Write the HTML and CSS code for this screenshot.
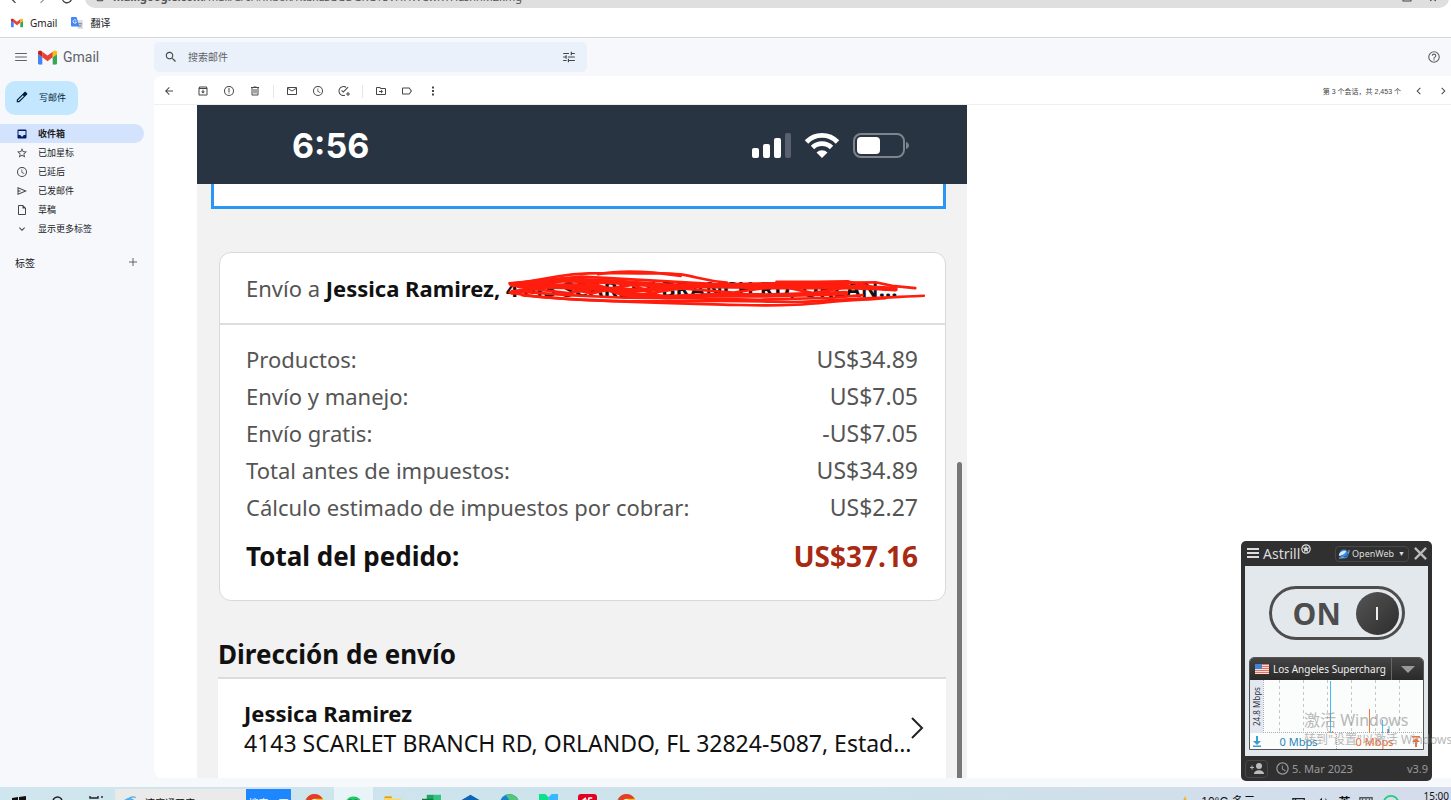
FILE: index.html
```html
<!DOCTYPE html>
<html lang="zh-CN">
<head>
    <meta charset="UTF-8">
    <meta name="viewport" content="width=device-width, initial-scale=1.0">
    <title>Gmail</title>
    <link rel="stylesheet" href="styles.css">
</head>
<body>
    <!-- Shared symbols -->
    <svg class="symbols" width="0" height="0">
        <symbol id="gmail" viewBox="52 42 88 66">
            <path fill="#4285f4" d="M58 108h14V74L52 59v43c0 3.320 2.690 6 6 6"/>
            <path fill="#34a853" d="M120 108h14c3.320 0 6-2.690 6-6V59l-20 15"/>
            <path fill="#fbbc04" d="M120 48v26l20-15v-8c0-7.420-8.470-11.650-14.400-7.200"/>
            <path fill="#ea4335" d="M72 74V48l24 18 24-18v26L96 92"/>
            <path fill="#c5221f" d="M52 51v8l20 15V48l-5.600-4.200c-5.940-4.450-14.400-.22-14.400 7.200"/>
        </symbol>
        <symbol id="chrome" viewBox="0 0 24 24">
            <circle cx="12" cy="12" r="12" fill="#fbc116"/>
            <path fill="#e33b2e" d="M12 0a12 12 0 0 1 10.400 6H12a6 6 0 0 0-5.200 9L1.600 6A12 12 0 0 1 12 0z"/>
            <path fill="#229a4a" d="M1.600 6l5.200 9a6 6 0 0 0 5.200 3l-2 6A12 12 0 0 1 1.600 6z"/>
            <circle cx="12" cy="12" r="5.500" fill="#fff"/>
            <circle cx="12" cy="12" r="4.300" fill="#4285f4"/>
        </symbol>
        <symbol id="clock" viewBox="0 0 24 24">
            <path d="M12 2a10 10 0 1 0 0 20 10 10 0 0 0 0-20zm0 18a8 8 0 1 1 0-16 8 8 0 0 1 0 16zm.5-13H11v6l5.200 3.200.8-1.300-4.500-2.700V7z"/>
        </symbol>
    </svg>

    <div class="address-bar">
        <div class="address-row">
            <button class="nav-btn" aria-label="Back"><svg viewBox="0 0 24 24"><path d="M20 11H7.800l5.600-5.600L12 4l-8 8 8 8 1.400-1.400L7.800 13H20z"/></svg></button>
            <button class="nav-btn muted" aria-label="Forward"><svg viewBox="0 0 24 24"><path d="M4 11h12.200l-5.600-5.600L12 4l8 8-8 8-1.400-1.400 5.600-5.600H4z"/></svg></button>
            <button class="nav-btn" aria-label="Reload"><svg viewBox="0 0 24 24"><path d="M17.600 6.400A8 8 0 1 0 19.700 14h-2.100A6 6 0 1 1 12 6c1.700 0 3.100.7 4.200 1.800L13 11h7V4z"/></svg></button>
            <div class="omnibox">
                <svg class="lock" viewBox="0 0 24 24"><path d="M18 8h-1V6A5 5 0 0 0 7 6v2H6a2 2 0 0 0-2 2v10c0 1.100.9 2 2 2h12a2 2 0 0 0 2-2V10a2 2 0 0 0-2-2zM9 6a3 3 0 0 1 6 0v2H9zm9 14H6V10h12z"/></svg>
                <span class="url"><b>mail.google.com</b>/mail/u/0/#inbox/KtbxLzGGDGRGTSVHHWCwRTHLshhMZkmg</span>
                <span class="omni-icons">
                    <svg viewBox="0 0 24 24"><path d="M7 14a4 4 0 1 1 3.500-6H21v3h-2v3h-3v-3h-5.500A4 4 0 0 1 7 14z"/></svg>
                    <svg viewBox="0 0 24 24"><path d="M15.400 7.400 14 6l-6 6 6 6 1.400-1.400L10.800 12z"/></svg>
                    <svg viewBox="0 0 24 24"><path d="M3 4h18v17H3zm2 2v13h14V6z"/></svg>
                    <svg viewBox="0 0 24 24"><path d="m12 2 2.800 6.600 7.200.6-5.500 4.700 1.700 7L12 17.300 5.800 21l1.700-7L2 9.200l7.200-.6z"/></svg>
                </span>
            </div>
        </div>
    </div>

    <nav class="bookmarks">
        <a href="#"><svg class="bm-icon" viewBox="0 0 88 66"><use href="#gmail"/></svg>Gmail</a>
        <a href="#">
            <svg class="bm-icon" viewBox="0 0 24 24">
                <path fill="#dcdfe3" d="M9 6h13c1 0 2 1 2 2v14c0 1-1 2-2 2h-8z"/>
                <path fill="none" stroke="#7b8794" stroke-width="1.500" d="M14 13h8M18 11v2m3 0c-1 4-3 6-5 7m0-5c1 2 3 4 5 5"/>
                <path fill="#4285f4" d="M2 0h9l6 19H2c-1 0-2-1-2-2V2c0-1 1-2 2-2z"/>
                <path fill="none" stroke="#fff" stroke-width="1.600" d="M10.500 7A3.500 3.500 0 1 0 11 10H8"/>
            </svg>翻译</a>
    </nav>

    <div class="gmail-app">
        <aside class="sidebar">
            <div class="brand">
                <button class="icon-btn" aria-label="主菜单"><svg viewBox="0 0 24 24"><path d="M2 5h20v2H2zm0 6h20v2H2zm0 6h20v2H2z"/></svg></button>
                <svg class="brand-logo" viewBox="0 0 88 66"><use href="#gmail"/></svg>
                <span class="brand-name">Gmail</span>
            </div>
            <button class="compose">
                <svg viewBox="0 0 24 24"><path d="M20.700 5.600 18.400 3.300a1.500 1.500 0 0 0-2.100 0L3 16.600V21h4.400L20.700 7.700a1.500 1.500 0 0 0 0-2.100zM6.600 19H5v-1.600L13.500 9l1.600 1.600z"/></svg>
                写邮件
            </button>
            <ul class="folders">
                <li><a class="folder active" href="#"><svg viewBox="0 0 24 24"><path d="M19 3H5a2 2 0 0 0-2 2v14c0 1.100.9 2 2 2h14a2 2 0 0 0 2-2V5a2 2 0 0 0-2-2zm0 11h-4a3 3 0 0 1-6 0H5V6h14z"/></svg>收件箱</a></li>
                <li><a class="folder" href="#"><svg viewBox="0 0 24 24"><path d="m22 9.200-7.200-.6L12 2 9.200 8.600 2 9.200l5.500 4.700L5.800 21l6.200-3.700 6.200 3.700-1.600-7zM12 15.400l-3.800 2.300 1-4.300-3.300-2.900 4.400-.4L12 6.100l1.700 4 4.400.4-3.300 2.900 1 4.300z"/></svg>已加星标</a></li>
                <li><a class="folder" href="#"><svg><use href="#clock"/></svg>已延后</a></li>
                <li><a class="folder" href="#"><svg viewBox="0 0 24 24"><path d="M3 4v16l19-8zm2 3 11.800 5L5 17v-3.500l6-1.500-6-1.500z"/></svg>已发邮件</a></li>
                <li><a class="folder" href="#"><svg viewBox="0 0 24 24"><path d="M14 2H6a2 2 0 0 0-2 2v16c0 1.100.9 2 2 2h12a2 2 0 0 0 2-2V8zM6 20V4h7v5h5v11z"/></svg>草稿</a></li>
                <li><a class="folder" href="#"><svg viewBox="0 0 24 24"><path d="m7.400 8.600 4.600 4.600 4.600-4.600L18 10l-6 6-6-6z"/></svg>显示更多标签</a></li>
            </ul>
            <div class="labels">
                <span>标签</span>
                <button class="icon-btn" aria-label="新建标签"><svg viewBox="0 0 24 24"><path d="M20 13h-7v7h-2v-7H4v-2h7V4h2v7h7z"/></svg></button>
            </div>
        </aside>

        <div class="content">
            <header class="topbar">
                <form class="search">
                    <button type="button" class="icon-btn" aria-label="搜索"><svg viewBox="0 0 24 24"><path d="M15.500 14h-.8l-.3-.3a6.500 6.500 0 1 0-.7.7l.3.3v.8l5 5 1.500-1.500zm-6 0a4.500 4.500 0 1 1 0-9 4.500 4.500 0 0 1 0 9z"/></svg></button>
                    <input type="text" placeholder="搜索邮件" aria-label="搜索邮件">
                    <button type="button" class="icon-btn" aria-label="搜索选项"><svg viewBox="0 0 24 24"><path d="M2 17v2h6v-2zM2 5v2h10V5zm10 16v-2h10v-2H12v-2h-2v6zM6 9v2H2v2h4v2h2V9zm16 4v-2H10v2zm-7-4h2V7h5V5h-5V3h-2z"/></svg></button>
                </form>
                <button class="icon-btn help" aria-label="支持"><svg viewBox="0 0 24 24"><path d="M11 18h2v-2h-2zm1-16a10 10 0 1 0 0 20 10 10 0 0 0 0-20zm0 18a8 8 0 1 1 0-16 8 8 0 0 1 0 16zm0-14a4 4 0 0 0-4 4h2a2 2 0 1 1 4 0c0 2-3 1.800-3 5h2c0-2.200 3-2.500 3-5a4 4 0 0 0-4-4z"/></svg></button>
            </header>

            <main class="mail">
                <div class="toolbar">
                    <button class="tool back" aria-label="返回"><svg viewBox="0 0 24 24"><path d="M20 11H7.800l5.600-5.600L12 4l-8 8 8 8 1.400-1.400L7.800 13H20z"/></svg></button>
                    <button class="tool" aria-label="归档"><svg viewBox="0 0 24 24"><path d="M19 3H5L3 6v13c0 1.100.9 2 2 2h14a2 2 0 0 0 2-2V6zm0 16H5V8h14zM5.500 6l.5-1h12l.5 1zM11 9.500h2V13h3l-4 4-4-4h3z"/></svg></button>
                    <button class="tool" aria-label="举报垃圾邮件"><svg viewBox="0 0 24 24"><path d="M12 2a10 10 0 1 0 0 20 10 10 0 0 0 0-20zm0 18a8 8 0 1 1 0-16 8 8 0 0 1 0 16zM11 6h2v8h-2zm0 9h2v2h-2z"/></svg></button>
                    <button class="tool" aria-label="删除"><svg viewBox="0 0 24 24"><path d="M15 4V3H9v1H4v2h1v13c0 1.100.9 2 2 2h10a2 2 0 0 0 2-2V6h1V4zm2 15H7V6h10zM9 8h2v9H9zm4 0h2v9h-2z"/></svg></button>
                    <span class="separator"></span>
                    <button class="tool" aria-label="标记为未读"><svg viewBox="0 0 24 24"><path d="M20 4H4a2 2 0 0 0-2 2v12c0 1.100.9 2 2 2h16a2 2 0 0 0 2-2V6a2 2 0 0 0-2-2zm0 14H4V8l8 5 8-5zm-8-7L4 6h16z"/></svg></button>
                    <button class="tool" aria-label="延后"><svg><use href="#clock"/></svg></button>
                    <button class="tool" aria-label="添加到任务列表"><svg viewBox="0 0 24 24"><path d="M21 5 10.500 15.500l-4-4L8 10l2.500 2.500L19.500 3.500zM11 20a8 8 0 1 1 4.500-14.600l1.400-1.400A10 10 0 1 0 14 21.600v-2A8 8 0 0 1 11 20zm8-6h2v3h3v2h-3v3h-2v-3h-3v-2h3z"/></svg></button>
                    <span class="separator"></span>
                    <button class="tool" aria-label="移至"><svg viewBox="0 0 24 24"><path d="M20 6h-8l-2-2H4a2 2 0 0 0-2 2v12c0 1.100.9 2 2 2h16a2 2 0 0 0 2-2V8a2 2 0 0 0-2-2zm0 12H4V6h5.200l2 2H20zm-8-6H8v2h4v3l4-4-4-4z"/></svg></button>
                    <button class="tool" aria-label="标签"><svg viewBox="0 0 24 24"><path d="M16 5H4a2 2 0 0 0-2 2v10c0 1.100.9 2 2 2h12c.7 0 1.300-.3 1.600-.8L22 12l-4.400-6.200C17.300 5.300 16.700 5 16 5zm0 12H4V7h12l3.500 5z"/></svg></button>
                    <button class="tool" aria-label="更多"><svg viewBox="0 0 24 24"><path d="M10 3h4v4h-4zm0 7h4v4h-4zm0 7h4v4h-4z"/></svg></button>
                    <div class="pager">
                        <span>第 3 个会话，共 2,453 个</span>
                        <button aria-label="较新"><svg viewBox="0 0 24 24"><path d="M15.400 6.400 14 5l-7 7 7 7 1.400-1.400L9.800 12z"/></svg></button>
                        <button aria-label="较旧"><svg viewBox="0 0 24 24"><path d="M8.600 6.400 10 5l7 7-7 7-1.400-1.400 5.600-5.600z"/></svg></button>
                    </div>
                </div>

                <!-- Attached phone view of the order -->
                <article class="phone" lang="es">
                    <div class="status">
                        <span class="time">6:56</span>
                        <svg class="signals" viewBox="0 0 158 28">
                            <g fill="#fff">
                                <rect x="1" y="16" width="7" height="10" rx="2"/>
                                <rect x="12" y="12" width="7" height="14" rx="2"/>
                                <rect x="23" y="6" width="7" height="20" rx="2"/>
                                <rect x="34" y="1" width="6" height="25" rx="2" fill="#596070"/>
                            </g>
                            <g fill="none" stroke="#fff" stroke-width="4.800">
                                <path d="M55.500 10a21.500 21.500 0 0 1 31 0"/>
                                <path d="M61.500 15.500a13.500 13.500 0 0 1 19 0"/>
                            </g>
                            <path fill="#fff" d="M65.500 20.500a8 8 0 0 1 11 0L71 26z"/>
                            <rect x="103" y="2" width="50" height="23" rx="7" fill="none" stroke="#7d848e" stroke-width="2"/>
                            <rect x="106" y="5" width="23" height="17" rx="4" fill="#fff"/>
                            <path fill="#7d848e" d="M155 10c4 1 4 6 0 7z"/>
                        </svg>
                    </div>
                    <div class="field"></div>

                    <section class="order">
                        <div class="ship-to">Envío a <strong>Jessica Ramirez,
                            <span class="struck">4143 SCARLET BRANCH RD, ORLAN…
                                <svg class="scribble" viewBox="75 60 1270 115">
                                    <g fill="none" stroke="#ff1d0e" stroke-width="8" stroke-linecap="round" stroke-linejoin="round">
                                        <path d="M82 100 300 80 520 92 720 103 1190 97 1240 108 1310 115"/>
                                        <path d="M84 104 230 79C320 64 400 72 520 70S640 90 740 98"/>
                                        <path d="M350 73C420 60 520 66 600 78"/>
                                        <path d="M82 128C200 150 400 158 640 154S900 162 1000 155 1180 145 1336 138"/>
                                        <path d="M120 136C300 156 620 162 780 166S1000 162 1060 156 1160 150 1220 145"/>
                                        <path d="M90 124 260 136 430 144 640 146 840 150 1060 144 1150 136"/>
                                        <path stroke-width="16" d="M92 104 250 90 400 96 560 108 740 108 920 104 1105 98"/>
                                        <path stroke-width="14" d="M110 108 280 112 470 122 650 106 850 112 1100 112 1200 115 1250 118"/>
                                        <path stroke-width="14" d="M90 128 200 108 340 106 430 134 560 142 700 136 860 137 1100 130"/>
                                        <path stroke-width="8" d="M140 116 260 130 360 114 480 134 600 116 760 128 900 108 1000 130 1140 106"/>
                                        <path stroke-width="10" d="M190 98 330 130 450 104 540 140"/>
                                        <path d="M890 96H1110L1220 120"/>
                                    </g>
                                </svg>
                            </span></strong>
                        </div>
                        <table class="totals">
                            <tbody>
                                <tr><th scope="row">Productos:</th><td>US$34.89</td></tr>
                                <tr><th scope="row">Envío y manejo:</th><td>US$7.05</td></tr>
                                <tr><th scope="row">Envío gratis:</th><td>-US$7.05</td></tr>
                                <tr><th scope="row">Total antes de impuestos:</th><td>US$34.89</td></tr>
                                <tr><th scope="row">Cálculo estimado de impuestos por cobrar:</th><td>US$2.27</td></tr>
                            </tbody>
                            <tfoot>
                                <tr><th scope="row">Total del pedido:</th><td>US$37.16</td></tr>
                            </tfoot>
                        </table>
                    </section>

                    <h2 class="address-title">Dirección de envío</h2>
                    <a class="address" href="#">
                        <span class="address-text"><strong>Jessica Ramirez</strong>4143 SCARLET BRANCH RD, ORLANDO, FL 32824-5087, Estad…</span>
                        <svg class="chevron" viewBox="0 0 13 22"><path fill="none" stroke="#222" stroke-width="2" d="m1 1 10 10L1 21"/></svg>
                    </a>
                    <div class="scroll-thumb"></div>
                </article>
            </main>
        </div>
    </div>

    <footer class="taskbar">
        <div class="task-row">
            <button class="task narrow" aria-label="Start"><svg class="small" viewBox="0 0 14 14"><path d="M0 2 6 1v5.500H0zm7-1.100L14 0v6.500H7zM0 7.500h6V13l-6-1zm7 0h7V14l-7-1z"/></svg></button>
            <button class="task" aria-label="Search"><svg class="small" viewBox="0 0 14 14"><path fill="none" stroke="#222" stroke-width="1.500" d="M11 5.500a4.500 4.500 0 1 1-9 0 4.500 4.500 0 0 1 9 0zM10 9l4 5"/></svg></button>
            <button class="task narrow" aria-label="Task view"><svg class="small" viewBox="0 0 14 14"><path fill="none" stroke="#222" stroke-width="1.400" d="M1 0v2h8V0M1 5h8v5H1zM1 14v-2h8v2M13 0v2m0 2v10"/></svg></button>
            <form class="task-search">
                <svg viewBox="0 0 24 24"><g fill="none" stroke="#4db2ec" stroke-width="4"><path d="M20 17A8 8 0 1 1 20 12H6"/><path stroke-width="2" d="M3 21C-1 13 15-1 22 4"/></g></svg>
                <input type="text" value="速度通开店" aria-label="搜索">
                <button type="button">搜索一下</button>
            </form>
            <button class="task pinned" aria-label="Chrome"><svg viewBox="0 0 24 24"><use href="#chrome"/></svg></button>
            <button class="task pinned current" aria-label="WeChat"><svg viewBox="0 0 24 24"><path fill="#20c964" d="M12 3c6 0 10 4 10 9s-4 9-10 9S2 17 2 12s4-9 10-9z"/><circle cx="8" cy="8" r="1.500" fill="#0a6b33"/><circle cx="15" cy="8" r="1.500" fill="#0a6b33"/></svg></button>
            <button class="task pinned" aria-label="Explorer"><svg viewBox="0 0 24 24"><path fill="#e0a100" d="M2 3h9v4H2z"/><path fill="#ffd767" d="M2 5h9l2 1h10v15H2z"/></svg></button>
            <button class="task pinned" aria-label="Excel"><svg viewBox="0 0 24 24"><path fill="#21a366" d="M6 1h9v21H6z"/><path fill="#33c481" d="M15 1h9v21h-9z"/><path fill="#107c41" d="M0 6h14v12H0z"/></svg></button>
            <button class="task pinned" aria-label="Mail"><svg viewBox="0 0 24 24"><path fill="#0f64b5" d="M0 8 12 1l12 7v14H0z"/></svg></button>
            <button class="task pinned" aria-label="Edge"><svg viewBox="0 0 24 24"><circle cx="12" cy="12" r="12" fill="#1683d0"/><path fill="#54c777" d="M7 1c9-3 17 3 17 11h-9z"/></svg></button>
            <button class="task pinned" aria-label="Notes"><svg viewBox="0 0 24 24"><path fill="#0be08b" d="M0 0h8l4 4v20H0z"/><path fill="#38b8ff" d="M24 0h-8l-4 4v20h12z"/></svg></button>
            <button class="task pinned" aria-label="Reader"><svg viewBox="0 0 24 24"><rect width="24" height="24" rx="4" fill="#e1001f"/><path fill="none" stroke="#fff" stroke-width="2" d="M10 5 6 8h4l-4 6M18 5h-4l-2 8M13 9h4"/></svg></button>
            <button class="task pinned" aria-label="Chrome"><svg viewBox="0 0 24 24"><use href="#chrome"/></svg></button>
            <div class="tray">
                <svg viewBox="0 0 16 16"><path fill="#f3b32a" d="m8 0 4 10H4z"/><circle cx="8" cy="9" r="5" fill="#f3b32a"/></svg>
                <span class="weather">10°C 多云</span>
                <svg viewBox="0 0 16 16"><path fill="none" stroke="#222" stroke-width="1.500" d="M1 3h13v9H1zM4 3v8"/></svg>
                <svg viewBox="0 0 16 16"><path d="M1 6h3l4-4v12l-4-4H1z"/><path fill="none" stroke="#222" d="M10 5c1 1 1 5 0 6m2-8c2 2 2 8 0 10"/></svg>
                <b>英</b>
                <svg viewBox="0 0 16 16"><path fill="none" stroke="#555" stroke-width="1.500" d="M1 2h14v11H1zM4 3v9m4-9v9m4-9v9M2 7h12"/></svg>
                <svg class="ring" viewBox="0 0 20 20"><circle cx="10" cy="10" r="8" fill="none" stroke="#1fcf7a" stroke-width="2"/></svg>
                <span class="clock">15:00</span>
            </div>
        </div>
    </footer>

    <!-- VPN widget floating over the desktop -->
    <section class="vpn" lang="en">
        <div class="vpn-head">
            <button class="vpn-menu" aria-label="Menu"><svg viewBox="0 0 12 11"><path fill="none" stroke="#ddd" stroke-width="2" d="M0 1h12M0 5h12M0 9h12"/></svg></button>
            <span class="vpn-name">Astrill</span>
            <svg class="vpn-star" viewBox="0 0 12 12"><circle cx="6" cy="6" r="5" fill="none" stroke="#ddd" stroke-width="1.500"/><path fill="#ddd" d="m6 1.500 1 3 3.300-.2L7.800 6.500 9 9.800 6 8 3 9.800l1.200-3.300L1.700 4.300 5 4.500z"/></svg>
            <span class="vpn-mode">
                <svg viewBox="0 0 12 12"><circle cx="6" cy="6" r="4.500" fill="#3c87d6"/><path fill="#d7ecff" d="M1 8C0 5 5 2 8 3c0 2-3 4-7 5z"/><path fill="none" stroke="#8ec4f5" d="M1 10c4 1 11-4 10-8"/><path fill="#174b94" d="M5 9c3-1 5-3 5-5 1 3-2 6-5 5z"/></svg>
                <select aria-label="Mode"><option>OpenWeb</option></select>
            </span>
            <button class="vpn-close" aria-label="Close"><svg viewBox="0 0 14 14"><path fill="none" stroke="#bbb" stroke-width="2.500" d="m1 1 12 12M13 1 1 13"/></svg></button>
        </div>
        <div class="vpn-body">
            <label class="switch">
                <input type="checkbox" checked>
                <span>ON</span>
                <i class="knob"></i>
            </label>
            <div class="server-panel">
                <div class="server">
                    <svg viewBox="0 0 14 10"><path fill="#f7dcd5" d="M0 0h14v10H0z"/><path stroke="#e2735f" stroke-width="1" d="M0 .5h14M0 2.500h14M0 4.500h14M0 6.500h14M0 8.500h14"/><path fill="#3d86d8" d="M0 0h7v5H0z"/></svg>
                    <select aria-label="Server"><option>Los Angeles Supercharg</option></select>
                    <span class="server-arrow"></span>
                </div>
                <div class="graph">
                    <span class="graph-max">24.8 Mbps</span>
                    <svg viewBox="0 0 160 53" preserveAspectRatio="none">
                        <path fill="none" stroke="#c4c8c8" stroke-dasharray="3 3" d="M16.500 0v53M40.500 0v53M64.500 0v53M88.500 0v53M112.500 0v53M136.500 0v53"/>
                        <path fill="none" stroke="#aaa" stroke-dasharray="1 1" d="M0 52.500h160M.5 0v53"/>
                        <path fill="none" stroke="#42bdf5" d="M67.500 1v52M119.500 40v13M126 46v7"/>
                        <path fill="none" stroke="#f17a49" d="M106.500 29v24M66 51v2M69.500 51v2"/>
                        <path fill="none" stroke="#a33" d="M125 49v4"/>
                    </svg>
                </div>
                <div class="rates">
                    <svg viewBox="0 0 8 11"><path fill="#3d9bd0" d="M3 0h2v5h3L4 9 0 5h3zM0 9.500h8V11H0z"/></svg>
                    <span class="down">0 Mbps</span>
                    <span class="up">0 Mbps</span>
                    <svg viewBox="0 0 8 11"><path fill="#f0743a" d="M3 11h2V6h3L4 2 0 6h3zM0 0h8v1.500H0z"/></svg>
                </div>
            </div>
        </div>
        <div class="vpn-foot">
            <button class="add-user" aria-label="Add user"><svg viewBox="0 0 14 12"><circle cx="9" cy="3" r="3" fill="#bbb"/><path fill="#bbb" d="M4 11c0-5 10-5 10 0zM0 4h1.500V2.500h1V4H4v1H2.500v1.500h-1V5H0z"/></svg></button>
            <svg class="foot-clock" viewBox="0 0 24 24"><use href="#clock"/></svg>
            <span>5. Mar 2023</span>
            <span class="version">v3.9</span>
        </div>
    </section>

    <div class="watermark">
        <p class="watermark-title">激活 Windows</p>
        <p>转到"设置"以激活 Windows。</p>
    </div>
</body>
</html>
```
FILE: styles.css
```css
* {
    box-sizing: border-box;
}

body {
    margin: 0;
    height: 100vh;
    display: flex;
    flex-direction: column;
    overflow: hidden;
    position: relative;
    font-family: "Liberation Sans", "Noto Sans CJK SC", sans-serif;
    font-size: 9px;
    color: #202124;
    background-color: #f6f8fc;
}

button {
    padding: 0;
    border: none;
    background: none;
    font: inherit;
    color: inherit;
    cursor: pointer;
}

input, select {
    border: none;
    background: none;
    font: inherit;
    color: inherit;
    outline: none;
}

a {
    color: inherit;
    text-decoration: none;
}

svg {
    display: block;
    flex-shrink: 0;
    fill: currentColor;
}

.symbols {
    position: absolute;
}

/* Browser */
.address-bar {
    flex: 0 0 8px;
    display: flex;
    align-items: flex-end;
    overflow: hidden;
    background-color: #fff;
}

.address-row {
    flex: 1;
    display: flex;
    align-items: center;
    height: 20px;
    padding-left: 7px;
    color: #444;
}

.nav-btn {
    width: 26px;
    height: 20px;
}

.nav-btn svg {
    width: 16px;
    height: 16px;
}

.muted {
    color: #999;
}

.omnibox {
    flex: 1;
    display: flex;
    align-items: center;
    height: 20px;
    margin-right: 2px;
    padding: 0 10px 2px;
    border-radius: 10px;
    background-color: #dfdfdf;
}

.lock {
    width: 10px;
    height: 10px;
}

.url {
    margin-left: 8px;
    font-family: "Noto Sans", sans-serif;
    font-size: 11px;
    line-height: 12px;
    color: #555;
}

.omni-icons {
    display: flex;
    gap: 14px;
    margin-left: auto;
}

.omni-icons svg {
    width: 12px;
    height: 12px;
}

.bookmarks {
    flex: 0 0 30px;
    display: flex;
    align-items: center;
    gap: 14px;
    padding-left: 11px;
    border-bottom: 1px solid #d5d8dc;
    background-color: #fff;
    font-family: "Noto Sans", "Noto Sans CJK SC", sans-serif;
    font-size: 10px;
}

.bookmarks a {
    display: flex;
    align-items: center;
    gap: 7px;
}

.bm-icon {
    width: 12px;
    height: 12px;
}

/* Gmail layout */
.gmail-app {
    flex: 1;
    display: flex;
    min-height: 0;
    padding-bottom: 9px;
}

.sidebar {
    flex: 0 0 154px;
}

.icon-btn {
    color: #5f6368;
}

.icon-btn svg {
    width: 14px;
    height: 14px;
}

.search svg {
    color: #444746;
}

.brand {
    display: flex;
    align-items: center;
    height: 38px;
    padding-left: 14px;
}

.brand-logo {
    width: 19px;
    height: 15px;
    margin-left: 10px;
}

.brand-name {
    margin-left: 6px;
    font-family: Roboto, sans-serif;
    font-size: 14px;
    color: #5f6368;
}

.compose {
    display: flex;
    align-items: center;
    gap: 10px;
    height: 34px;
    margin: 5px 0 9px 5px;
    padding: 0 12px 2px 10px;
    border-radius: 10px;
    background-color: #c2e7ff;
    color: #001d35;
}

.compose svg {
    width: 14px;
    height: 14px;
}

.folders {
    list-style: none;
    margin: 0;
    padding: 0;
}

.folder {
    display: flex;
    align-items: center;
    gap: 10px;
    height: 19px;
    margin-right: 10px;
    padding-left: 16px;
    border-radius: 0 10px 10px 0;
}

.folder svg {
    width: 12px;
    height: 12px;
    color: #444746;
}

.folder.active {
    background-color: #d3e3fd;
    font-weight: bold;
}

.folder.active svg {
    color: #001d6c;
}

.labels {
    display: flex;
    justify-content: space-between;
    align-items: center;
    height: 20px;
    margin-top: 14px;
    padding: 0 15px;
    font-size: 10px;
}

.labels svg {
    width: 12px;
    height: 12px;
}

.content {
    flex: 1;
    display: flex;
    flex-direction: column;
    min-width: 0;
}

.topbar {
    flex: 0 0 38px;
    display: flex;
    justify-content: space-between;
    align-items: center;
    padding-right: 10px;
}

.search {
    display: flex;
    align-items: center;
    width: 433px;
    height: 30px;
    padding: 0 11px 0 10px;
    border-radius: 5px;
    background-color: #eaf1fb;
}

.search input {
    flex: 1;
    padding: 0 10px;
    font-size: 10px;
}

.search input::placeholder {
    color: #5f6368;
    opacity: 1;
}

.mail {
    flex: 1;
    display: flex;
    flex-direction: column;
    min-height: 0;
    overflow: hidden;
    border-radius: 8px 0 0 8px;
    background-color: #fff;
}

.toolbar {
    flex: 0 0 29px;
    display: flex;
    align-items: center;
    padding: 2px 0 0 2px;
    border-bottom: 1px solid #eceff1;
    color: #444746;
}

.tool {
    display: flex;
    justify-content: center;
    width: 26px;
}

.toolbar svg {
    width: 12px;
    height: 12px;
}

.back {
    margin-right: 8px;
}

.separator {
    width: 1px;
    height: 13px;
    margin: 0 5px;
    background-color: #e6e6e6;
}

.pager {
    display: flex;
    align-items: center;
    gap: 12px;
    margin-left: auto;
    padding-right: 2px;
    font-size: 7px;
    color: #444;
}

/* Phone view */
.phone {
    flex: 1;
    position: relative;
    width: 100%;
    max-width: 770px;
    margin-left: 43px;
    overflow: hidden;
    background-color: #f2f2f2;
    font-family: "Noto Sans", sans-serif;
    font-size: 22px;
    color: #111;
}

.status {
    display: flex;
    align-items: center;
    justify-content: space-between;
    height: 79px;
    padding: 2px 58px 0 95px;
    background-color: #283441;
    color: #fff;
}

.time {
    font-family: Inter, sans-serif;
    font-size: 34px;
    font-weight: bold;
}

.signals {
    width: 158px;
    height: 28px;
}

.field {
    height: 25px;
    margin: 0 21px 0 14px;
    border: 3px solid #2b97f5;
    border-top: none;
    background-color: #fff;
}

.order {
    margin: 43px 21px 0 22px;
    border: 1px solid #d9d9d9;
    border-radius: 12px;
    background-color: #fff;
}

.ship-to {
    height: 72px;
    padding: 0 26px;
    border-bottom: 2px solid #dedede;
    line-height: 70px;
    white-space: nowrap;
    color: #555;
}

.ship-to strong {
    color: #111;
}

.struck {
    position: relative;
    display: inline-block;
    line-height: 30px;
}

.scribble {
    position: absolute;
    top: -3px;
    left: -2px;
    width: 426px;
    height: 38px;
}

.totals {
    width: 100%;
    padding: 15px 27px 19px 26px;
    border-spacing: 0;
    color: #555;
}

.totals th, .totals td {
    height: 37px;
    padding: 0;
    line-height: 30px;
    font-weight: normal;
    text-align: left;
}

.totals td {
    font-size: 23px;
    text-align: right;
}

.totals tfoot th, .totals tfoot td {
    height: 56px;
    padding-top: 6px;
    font-size: 26px;
    font-weight: bold;
    color: #111;
}

.totals tfoot td {
    font-size: 28px;
    color: #a82a12;
}

.address-title {
    margin: 35px 21px 0 21px;
    padding-bottom: 5px;
    border-bottom: 2px solid #dcdcdc;
    font-size: 26px;
    line-height: 36px;
}

.address {
    display: flex;
    align-items: center;
    justify-content: space-between;
    height: 110px;
    margin: 0 21px;
    padding: 0 22px 12px 26px;
    background-color: #fff;
}

.address-text {
    font-size: 23px;
    line-height: 30px;
    white-space: nowrap;
}

.address-text strong {
    display: block;
    font-size: 22px;
}

.chevron {
    width: 13px;
    height: 22px;
    margin-left: -4px;
}

.scroll-thumb {
    position: absolute;
    right: 5px;
    bottom: 0;
    width: 5px;
    height: 47%;
    border-radius: 3px 3px 0 0;
    background-color: #777;
}

/* Taskbar */
.taskbar {
    flex: 0 0 13px;
    overflow: hidden;
    background: linear-gradient(to right, #cfe6ee, #cde2ea 60%, #d5dcec);
}

.task-row {
    display: flex;
    align-items: center;
    height: 32px;
    color: #111;
}

.task {
    display: flex;
    justify-content: center;
    align-items: center;
    width: 39px;
    height: 32px;
}

.task svg {
    width: 19px;
    height: 19px;
}

.task .small {
    width: 14px;
    height: 14px;
}

.narrow {
    width: 38px;
}

.task-search {
    display: flex;
    align-items: center;
    width: 176px;
    height: 28px;
    padding-left: 6px;
    background-color: #eaeaea;
}

.task-search svg {
    width: 16px;
    height: 16px;
}

.task-search input {
    flex: 1;
    min-width: 0;
    padding: 0 8px 2px;
    font-size: 10px;
}

.task-search button {
    width: 45px;
    height: 28px;
    padding-bottom: 2px;
    background-color: #1e87ff;
    color: #fff;
    font-size: 10px;
}

.pinned {
    flex: 0 0 39px;
    padding-left: 8px;
}

.current {
    padding-left: 0;
    margin-left: 4px;
    margin-right: -4px;
    background-color: #e8f4f7;
}

.tray {
    display: flex;
    align-items: center;
    gap: 9px;
    margin-left: auto;
    padding-right: 2px;
    font-size: 12px;
    line-height: 14px;
}

.tray svg {
    width: 14px;
    height: 14px;
}

.weather {
    margin-right: 28px;
    padding-bottom: 2px;
}

.tray .ring {
    width: 18px;
    height: 18px;
}

.clock {
    align-self: flex-start;
    margin: -5px 0 0 14px;
    font-family: "Noto Sans", sans-serif;
    font-size: 10px;
    line-height: 14px;
}

/* VPN widget */
.vpn {
    position: absolute;
    right: 19px;
    bottom: 19px;
    width: 191px;
    border-radius: 5px;
    background-color: #303030;
    font-family: "Noto Sans", sans-serif;
    font-size: 11px;
    color: #ddd;
}

.vpn-head {
    display: flex;
    align-items: center;
    height: 25px;
    padding: 0 5px 0 6px;
}

.vpn-menu svg {
    width: 12px;
    height: 11px;
}

.vpn-name {
    margin-left: 4px;
    font-size: 14px;
}

.vpn-star {
    align-self: flex-start;
    width: 10px;
    height: 10px;
    margin: 3px 0 0 1px;
}

.vpn-mode {
    display: flex;
    align-items: center;
    height: 16px;
    margin-left: auto;
    padding: 0 3px 0 2px;
    border: 1px solid #484848;
    border-radius: 4px;
    font-size: 9px;
}

.vpn-mode::after {
    content: "▼";
    font-size: 7px;
}

.vpn-mode svg {
    width: 12px;
    height: 12px;
}

.vpn select {
    appearance: none;
    padding: 0;
}

.vpn-mode select {
    width: 46px;
    margin-left: 2px;
}

.vpn-close {
    margin-left: 5px;
}

.vpn-close svg {
    width: 13px;
    height: 13px;
}

.vpn-body {
    margin: 0 4px;
    padding: 20px 4px 6px;
    background-color: #e3e8ed;
}

.switch {
    display: flex;
    align-items: center;
    justify-content: space-between;
    width: 136px;
    height: 54px;
    margin: 0 auto 17px;
    padding: 0 3px 0 21px;
    border: 3px solid #4d4d4d;
    border-radius: 27px;
    color: #4d4d4d;
    font-family: "Open Sans", sans-serif;
    font-size: 30px;
    font-weight: bold;
    cursor: pointer;
}

.switch input {
    position: absolute;
    opacity: 0;
}

.knob {
    display: flex;
    align-items: center;
    justify-content: center;
    width: 43px;
    height: 43px;
    border-radius: 50%;
    background: linear-gradient(135deg, #555, #2d2d2d);
}

.knob::before {
    content: "";
    width: 2px;
    height: 13px;
    background-color: #eee;
}

.server-panel {
    border: 1px solid #555;
    border-radius: 5px 5px 0 0;
    background-color: #fbfcfc;
}

.server {
    display: flex;
    align-items: center;
    height: 22px;
    padding-left: 5px;
    border-radius: 4px 4px 0 0;
    background: linear-gradient(#444, #292929);
    color: #eee;
}

.server > svg {
    width: 14px;
    height: 10px;
}

.server select {
    flex: 1;
    min-width: 0;
    margin-left: 4px;
    font-size: 10px;
}

.server-arrow {
    display: flex;
    align-items: center;
    justify-content: center;
    width: 32px;
    height: 22px;
    border-left: 1px solid #666;
}

.server-arrow::before {
    content: "";
    border: 7px solid transparent;
    border-top-color: #999;
    border-bottom: none;
}

.graph {
    display: flex;
    height: 53px;
}

.graph-max {
    width: 13px;
    writing-mode: vertical-rl;
    transform: rotate(180deg);
    background-color: #e3e8f0;
    font-size: 8px;
    line-height: 13px;
    text-align: center;
    color: #334;
}

.graph svg {
    flex: 1;
    min-width: 0;
    height: 53px;
}

.rates {
    display: flex;
    align-items: center;
    height: 16px;
    padding: 0 3px;
}

.rates svg {
    width: 8px;
    height: 11px;
}

.rates span {
    flex: 1;
    text-align: center;
}

.down {
    color: #2788bb;
}

.up {
    border-left: 1px dotted #aaa;
    color: #ef6c35;
}

.vpn-foot {
    display: flex;
    align-items: center;
    height: 25px;
    padding: 0 4px;
    font-size: 11px;
    color: #999;
}

.add-user {
    display: flex;
    align-items: center;
    justify-content: center;
    width: 23px;
    height: 18px;
    border: 1px solid #484848;
    border-radius: 4px;
}

.add-user svg {
    width: 14px;
    height: 12px;
}

.foot-clock {
    width: 15px;
    height: 15px;
    margin: 0 2px 0 7px;
}

.version {
    margin-left: auto;
}

/* Activation notice */
.watermark {
    position: absolute;
    left: calc(100% - 147px);
    bottom: 52px;
    font-family: "Noto Sans", "Noto Sans CJK SC", sans-serif;
    font-size: 12px;
    line-height: 16px;
    white-space: nowrap;
    color: #8b8b8b;
    opacity: 0.6;
    pointer-events: none;
}

.watermark p {
    margin: 0;
}

.watermark .watermark-title {
    font-size: 16px;
    line-height: 24px;
}
```
